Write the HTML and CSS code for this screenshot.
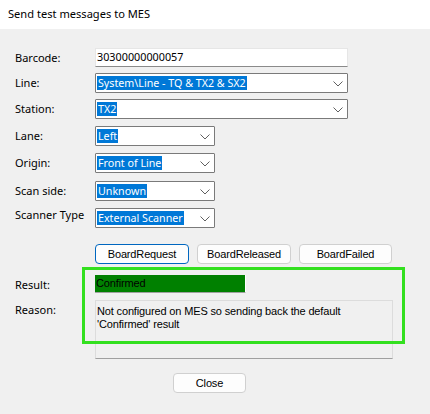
FILE: index.html
```html
<!DOCTYPE html>
<html>
<head>
<meta charset="utf-8">
<link rel="stylesheet" href="styles.css">
</head>
<body>
<div class="window">
  <div class="titlebar">Send test messages to MES</div>
  <div class="client">
    <div class="form">
      <div class="row r-barcode">
        <span class="label">Barcode:</span>
        <div class="textbox">30300000000057</div>
      </div>
      <div class="row r6">
        <span class="label">Line:</span>
        <div class="combo wide"><span class="sel">System\Line - TQ &amp; TX2 &amp; SX2</span><svg class="chev" width="10" height="6" viewBox="0 0 10 6"><path d="M0.5 0.5 L5 5 L9.5 0.5" fill="none" stroke="#606060" stroke-width="1"/></svg></div>
      </div>
      <div class="row r7">
        <span class="label">Station:</span>
        <div class="combo wide"><span class="sel">TX2</span><svg class="chev" width="10" height="6" viewBox="0 0 10 6"><path d="M0.5 0.5 L5 5 L9.5 0.5" fill="none" stroke="#606060" stroke-width="1"/></svg></div>
      </div>
      <div class="row r7">
        <span class="label">Lane:</span>
        <div class="combo narrow"><span class="sel">Left</span><svg class="chev" width="10" height="6" viewBox="0 0 10 6"><path d="M0.5 0.5 L5 5 L9.5 0.5" fill="none" stroke="#606060" stroke-width="1"/></svg></div>
      </div>
      <div class="row r8">
        <span class="label">Origin:</span>
        <div class="combo narrow"><span class="sel">Front of Line</span><svg class="chev" width="10" height="6" viewBox="0 0 10 6"><path d="M0.5 0.5 L5 5 L9.5 0.5" fill="none" stroke="#606060" stroke-width="1"/></svg></div>
      </div>
      <div class="row r7">
        <span class="label">Scan side:</span>
        <div class="combo narrow"><span class="sel">Unknown</span><svg class="chev" width="10" height="6" viewBox="0 0 10 6"><path d="M0.5 0.5 L5 5 L9.5 0.5" fill="none" stroke="#606060" stroke-width="1"/></svg></div>
      </div>
      <div class="row last">
        <span class="label up">Scanner Type</span>
        <div class="combo narrow"><span class="sel">External Scanner</span><svg class="chev" width="10" height="6" viewBox="0 0 10 6"><path d="M0.5 0.5 L5 5 L9.5 0.5" fill="none" stroke="#606060" stroke-width="1"/></svg></div>
      </div>
    </div>
    <div class="buttons">
      <button class="btn focus b1">BoardRequest</button>
      <button class="btn b2">BoardReleased</button>
      <button class="btn b3">BoardFailed</button>
    </div>
    <div class="results">
      <div class="rrow">
        <span class="label">Result:</span>
        <div class="resultbox">Confirmed</div>
      </div>
      <div class="rrow reason">
        <span class="label">Reason:</span>
        <div class="reasonbox">Not configured on MES so sending back the default<br>'Confirmed' result</div>
      </div>
      <div class="highlight"></div>
    </div>
    <div class="footer">
      <button class="btn close">Close</button>
    </div>
  </div>
</div>
</body>
</html>
```

FILE: styles.css
```css
* { box-sizing: border-box; }
html, body { margin: 0; padding: 0; }
body {
  width: 430px;
  height: 414px;
  overflow: hidden;
  background: #f0f0f0;
  font-family: "Noto Sans", "Open Sans", sans-serif;
  font-size: 11px;
  color: #000;
}
.window { width: 430px; height: 414px; display: flex; flex-direction: column; }
.titlebar {
  height: 29px;
  background: #fff;
  padding-left: 8px;
  line-height: 28px;
  font-size: 11.1px;
  color: #000;
}
.client { flex: 1; background: #f0f0f0; padding-top: 19px; }
.form { display: flex; flex-direction: column; }
.row { display: flex; align-items: center; height: 20px; }
.row.r-barcode { height: 19px; margin-bottom: 6px; }
.row.r6 { margin-bottom: 6px; }
.row.r7 { margin-bottom: 7px; }
.row.r8 { margin-bottom: 8px; }
.label {
  width: 95px;
  padding-left: 15px;
  flex: none;
  font-size: 11px;
  line-height: 16px;
  white-space: nowrap;
}
.label.up { margin-top: -6px; }
.textbox {
  width: 253px;
  height: 19px;
  background: #fff;
  border: 1px solid #e6e6e6;
  border-bottom-color: #8a8a8a;
  padding-left: 1px;
  line-height: 16px;
  font-size: 10.8px;
}
.combo {
  height: 20px;
  background: #fff;
  border: 1px solid #7a7a7a;
  border-radius: 1px;
  display: flex;
  align-items: center;
  padding-left: 1px;
  position: relative;
}
.combo.wide { width: 253px; }
.combo.narrow { width: 120px; }
.sel {
  background: #0078d7;
  color: #fff;
  line-height: 14px;
  height: 14px;
  padding: 0 1px;
  font-size: 10.7px;
  white-space: nowrap;
}
.chev { position: absolute; right: 4px; top: 7px; }
.buttons {
  display: flex;
  gap: 8px;
  padding-left: 95px;
  margin-top: 16px;
}
.btn {
  font-family: "Liberation Sans", Arial, sans-serif;
  font-size: 11px;
  height: 20px;
  background: #fdfdfd;
  border: 1px solid #d0d0d0;
  border-radius: 4px;
  padding: 0;
  color: #000;
  letter-spacing: -0.15px;
}
.btn.focus { border-color: #0067c0; }
.b1 { width: 94px; }
.b2 { width: 94px; }
.b3 { width: 93px; }
.results { position: relative; margin-top: 11px; display: flex; flex-direction: column; gap: 7px; }
.rrow { display: flex; align-items: flex-start; }
.rrow .label { padding-top: 2px; }
.resultbox {
  width: 151px;
  height: 18px;
  background: #008000;
  border-bottom: 1px solid #a0a0a0;
  border-right: 1px solid #fff;
  font-family: "Liberation Sans", Arial, sans-serif;
  font-size: 11px;
  line-height: 17px;
  padding-left: 1px;
  color: #000;
  letter-spacing: -0.15px;
}
.reasonbox {
  width: 298px;
  height: 59px;
  border: 1px solid #dcdcdc;
  border-bottom-color: #a0a0a0;
  background: #f0f0f0;
  font-family: "Liberation Sans", Arial, sans-serif;
  font-size: 11px;
  line-height: 13px;
  padding: 4px 0 0 1px;
  letter-spacing: -0.15px;
}
.highlight {
  position: absolute;
  left: 82px;
  top: -8px;
  width: 323px;
  height: 77px;
  border: 3px solid #33e01f;
  pointer-events: none;
}
.footer { padding-left: 173px; margin-top: 14px; }
.btn.close { width: 73px; }
```
